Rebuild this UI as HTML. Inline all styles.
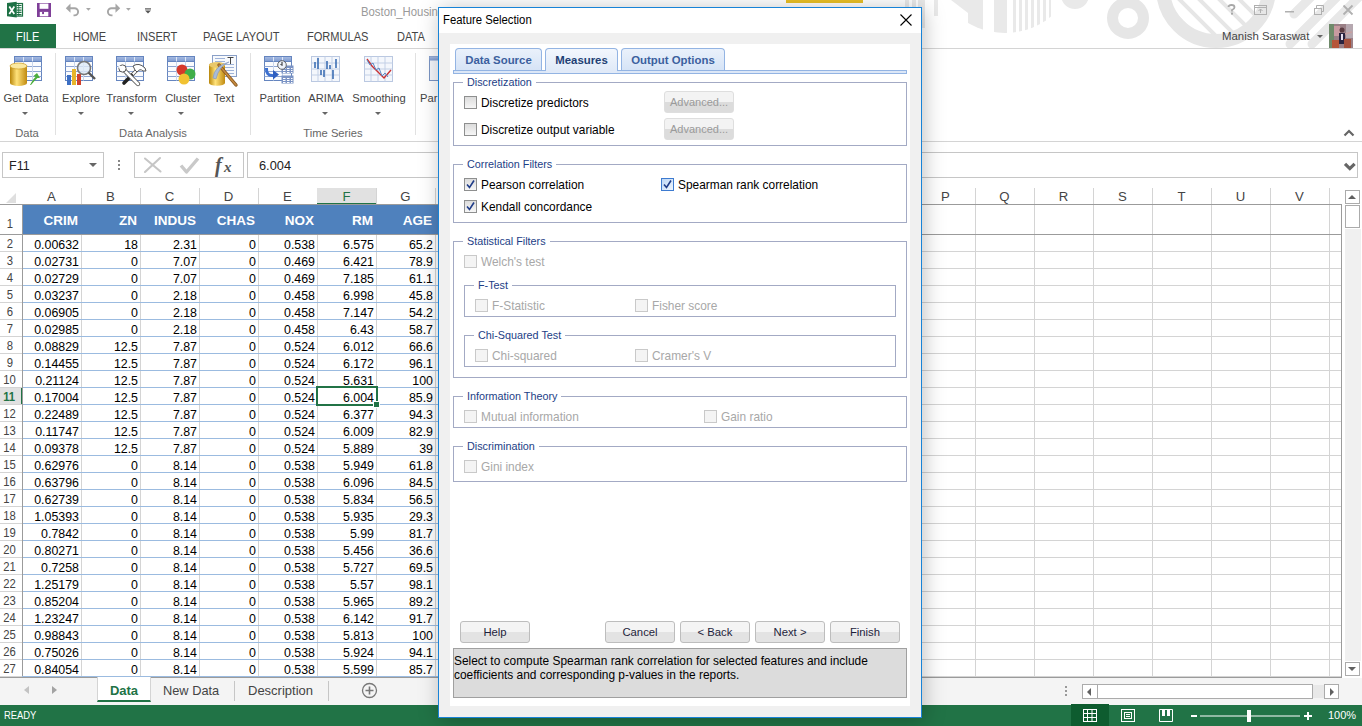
<!DOCTYPE html>
<html><head><meta charset="utf-8">
<style>
*{box-sizing:border-box;margin:0;padding:0}
html,body{width:1362px;height:726px;overflow:hidden;background:#fff;font-family:"Liberation Sans",sans-serif;position:relative}
.a{position:absolute}
/* title bar */
.ttl{position:absolute;left:361px;top:5px;font-size:12.6px;color:#9a9a9a;white-space:nowrap;transform:scaleX(0.9);transform-origin:0 0}
.rtab{position:absolute;top:30px;font-size:12.5px;color:#444;white-space:nowrap;transform:scaleX(0.885);transform-origin:0 0}
/* ribbon */
.rb{position:absolute;font-size:11.2px;color:#444;white-space:nowrap;text-align:center}
.gl{position:absolute;top:127px;font-size:11.2px;color:#666;white-space:nowrap;text-align:center}
.dd{position:absolute;width:0;height:0;border-left:3.5px solid transparent;border-right:3.5px solid transparent;border-top:3.5px solid #666}
.sep{position:absolute;top:53px;width:1px;height:82px;background:#e1e1e1}
/* grid */
.vl{position:absolute;top:188px;width:1px;height:488px;background:#d4d4d4}
.hl{position:absolute;left:0;width:1341px;height:1px;background:#d4d4d4}
.hlb{position:absolute;left:22px;width:420px;height:1px;background:#9bbbe0}
.thead{position:absolute;background:#4f81bd}
.th{position:absolute;color:#fff;font-weight:bold;font-size:13.5px;padding-top:2px;text-align:right;white-space:nowrap}
.td{position:absolute;height:17px;line-height:18px;padding-top:2px;font-size:12.4px;color:#000;text-align:right;white-space:nowrap}
.rh{position:absolute;left:0;width:20px;height:17px;line-height:18px;padding-top:1px;font-size:13.6px;color:#444;text-align:center;white-space:nowrap}
.rh span{display:inline-block;transform:scaleX(0.83)}
.rh.sel{color:#217346;font-weight:bold;background:#e1e1e1;width:23px;border-right:2px solid #217346;padding-right:3px;margin-top:1px;height:16px;padding-top:0}
.ch{position:absolute;top:188px;width:59px;height:17px;line-height:18px;font-size:13.2px;color:#444;text-align:center}
.ch.sel{background:#e1e1e1;color:#217346;border-bottom:2px solid #217346;height:17px}
/* dialog */
.dlg{position:absolute;left:438px;top:7px;width:484px;height:711px;background:#fff;border:1px solid #1883d7;box-shadow:2px 2px 20px rgba(0,0,0,0.25)}
.dfont{font-family:"Liberation Sans",sans-serif}
.gb{position:absolute;border:1px solid #a3aac4}
.gbl{position:absolute;top:-7px;left:9px;background:#fff;padding:0 4px;font-size:10.8px;color:#1c3e86;white-space:nowrap;line-height:13px}
.cb{position:absolute;width:13px;height:13px;border:1px solid #8e8f8f;background:linear-gradient(#dcdcdc,#f6f6f6)}
.cb.dis{border-color:#c9c9c9;background:#f4f4f4}
.cbl{position:absolute;font-size:11.9px;color:#000;white-space:nowrap;line-height:14px;padding-top:1px}
.cbl.dis{color:#a8a8a8}
.btn{position:absolute;width:70px;height:22px;border:1px solid #bdbdbd;border-radius:3px;background:linear-gradient(#f4f4f4 0,#f4f4f4 50%,#e3e3e3 50%,#e3e3e3 100%);font-size:11.3px;color:#1e1e3c;text-align:center;line-height:20px}
.btn.dis{color:#9a9a9a;border-color:#dedede;font-size:11px;background:linear-gradient(#f3f3f3 0,#f3f3f3 50%,#dcdcdc 50%,#dcdcdc 100%)}
.tab{position:absolute;top:48px;height:23px;border:1px solid #93b4e3;border-bottom:none;border-radius:4px 4px 0 0;background:linear-gradient(#eaf1fb,#d5e3f6);font-size:11.4px;font-weight:bold;color:#3b5f9e;text-align:center;line-height:22px;white-space:nowrap}
</style></head><body>

<!-- ===== title bar ===== -->
<svg class="a" style="left:600px;top:0" width="762" height="48" viewBox="600 0 762 48">
  <defs>
    <clipPath id="ringclip"><circle cx="1216" cy="-12" r="47"/></clipPath>
    <clipPath id="halfd"><circle cx="1005" cy="-40" r="73"/></clipPath>
  </defs>
  <g fill="#e9e9e9">
    <rect x="905" y="0" width="4" height="22"/><rect x="912" y="0" width="4" height="25"/>
    <rect x="918" y="0" width="7" height="28"/><rect x="934" y="0" width="4" height="16"/>
    <g clip-path="url(#halfd)">
      <path d="M951 0 H968 V13 Z"/>
      <rect x="968" y="0" width="15" height="40"/>
      <rect x="994" y="0" width="13" height="40"/>
      <rect x="1013" y="0" width="3" height="40"/><rect x="1019" y="0" width="3" height="40"/>
      <rect x="1025" y="0" width="3" height="40"/><rect x="1031" y="0" width="3" height="40"/>
      <rect x="1037" y="0" width="3" height="40"/><rect x="1043" y="0" width="3" height="40"/>
      <rect x="1049" y="0" width="2" height="40"/>
    </g>
    <circle cx="1075" cy="-5" r="14"/>
  </g>
  <circle cx="1128" cy="18" r="15.5" fill="none" stroke="#e6e6e6" stroke-width="11"/>
  <circle cx="1216" cy="-12" r="53" fill="none" stroke="#e6e6e6" stroke-width="14"/>
  <g clip-path="url(#ringclip)" stroke="#e6e6e6" stroke-width="4">
    <path d="M1150 -10 L1210 50 M1160 -20 L1225 45 M1170 -30 L1240 40 M1180 -40 L1255 35 M1190 -50 L1270 30"/>
  </g>
  <g stroke="#e8e8e8" stroke-width="9" stroke-linecap="round">
    <path d="M1314 -6 L1294 14 M1340 -6 L1290 44 M1362 -6 L1312 44"/>
  </g>
  <rect x="786" y="0" width="77" height="3" fill="#e8bf26"/>
</svg>
<!-- excel icon -->
<svg class="a" style="left:0;top:0" width="160" height="24" viewBox="0 0 160 24">
  <rect x="15.5" y="3.5" width="7" height="12.6" fill="#fff" stroke="#1e7145" stroke-width="1.2"/>
  <path d="M16.5 5.5 H21.5 M16.5 7.8 H21.5 M16.5 10.1 H21.5 M16.5 12.4 H21.5 M16.5 14.6 H21.5" stroke="#1e7145" stroke-width="1.1"/>
  <path d="M18.7 3.5 V16" stroke="#1e7145" stroke-width="0.8"/>
  <path d="M7 3 L16.7 1.8 L16.7 17.6 L7 16.3 Z" fill="#1e7145"/>
  <path d="M9.3 6.6 L14.3 14 M14.3 6.6 L9.3 14" stroke="#fff" stroke-width="1.7"/>
  <!-- save -->
  <rect x="37" y="3" width="14" height="14" fill="#7f3f98"/>
  <rect x="39.6" y="3.6" width="8.8" height="5.2" fill="#fff"/>
  <rect x="39.8" y="11.9" width="8.5" height="4.4" fill="#fff"/>
  <rect x="42.1" y="11.9" width="1.9" height="2.2" fill="#7f3f98"/>
  <!-- undo -->
  <path d="M69 8.2 H74.5 A3.6 3.6 0 0 1 74.5 15.4 H73.5" fill="none" stroke="#a6a6a6" stroke-width="1.9"/>
  <path d="M65.8 8.2 L70.5 3.6 L70.5 12.8 Z" fill="#a6a6a6"/>
  <path d="M86 8 L90.8 8 L88.4 10.8 Z" fill="#a6a6a6"/>
  <!-- redo -->
  <path d="M117 8.2 H111.5 A3.6 3.6 0 0 0 111.5 15.4 H112.5" fill="none" stroke="#a6a6a6" stroke-width="1.9"/>
  <path d="M120.2 8.2 L115.5 3.6 L115.5 12.8 Z" fill="#a6a6a6"/>
  <path d="M126 8 L130.8 8 L128.4 10.8 Z" fill="#a6a6a6"/>
  <!-- customize -->
  <rect x="145" y="8.3" width="6" height="1.2" fill="#555"/>
  <path d="M145 10.6 L151 10.6 L148 13.6 Z" fill="#555"/>
</svg>
<div class="ttl">Boston_Housing</div>
<!-- window controls -->
<svg class="a" style="left:1220px;top:0" width="142" height="20" viewBox="1220 0 142 20">
  <path d="M1228.5 7 Q1228.5 5 1231.5 5 Q1234.5 5 1234.5 7.3 Q1234.5 9 1232 10 V11.5" fill="none" stroke="#a8a8a8" stroke-width="1.8"/>
  <rect x="1231" y="12.6" width="2" height="2" fill="#a8a8a8"/>
  <rect x="1254.5" y="5.5" width="12" height="9" fill="none" stroke="#b0b0b0" stroke-width="1"/>
  <path d="M1254.5 7.5 H1266.5" stroke="#b0b0b0"/>
  <path d="M1260.5 13 V9 M1258.5 11 L1260.5 9 L1262.5 11" fill="none" stroke="#b0b0b0" stroke-width="1"/>
  <rect x="1285" y="11" width="9" height="1.5" fill="#b0b0b0"/>
  <rect x="1314.5" y="8.5" width="7" height="6" fill="none" stroke="#b0b0b0" stroke-width="1"/>
  <path d="M1316.5 8.5 V5.5 H1323.5 V11.5 H1321.5" fill="none" stroke="#b0b0b0" stroke-width="1"/>
  <path d="M1343.5 5.5 L1352.5 14.5 M1352.5 5.5 L1343.5 14.5" stroke="#b0b0b0" stroke-width="1.8"/>
</svg>

<!-- ===== ribbon tabs ===== -->
<div class="a" style="left:0;top:24px;width:56px;height:24px;background:#217346"></div>
<div class="rtab" style="left:16px;color:#fff">FILE</div>
<div class="rtab" style="left:73px">HOME</div>
<div class="rtab" style="left:137px">INSERT</div>
<div class="rtab" style="left:203px">PAGE LAYOUT</div>
<div class="rtab" style="left:307px">FORMULAS</div>
<div class="rtab" style="left:397px">DATA</div>
<div class="a" style="left:1222px;top:30px;font-size:11.4px;color:#444;white-space:nowrap">Manish Saraswat</div>
<div class="dd" style="left:1317px;top:35px"></div>
<svg class="a" style="left:1329px;top:24px" width="24" height="24" viewBox="0 0 24 24">
  <rect width="24" height="24" fill="#9a7f86"/>
  <rect x="0" y="0" width="5" height="24" fill="#6f8a6a"/>
  <rect x="17" y="0" width="7" height="14" fill="#b6a8b0"/>
  <rect x="5" y="2" width="6" height="10" fill="#c89aa0"/>
  <circle cx="13" cy="6" r="2.5" fill="#5a3a40"/>
  <rect x="10" y="9" width="6" height="11" fill="#2a2440"/>
  <rect x="12" y="10" width="2" height="6" fill="#e8e0f0"/>
  <rect x="3" y="16" width="7" height="8" fill="#b5563a"/>
  <rect x="15" y="15" width="7" height="9" fill="#a4503c"/>
  <path d="M16 10 L23 8" stroke="#c9a0a0" stroke-width="1.5"/>
</svg>
<div class="a" style="left:0;top:48px;width:1362px;height:1px;background:#d4d4d4"></div>

<!-- ===== ribbon body ===== -->
<!-- icons -->
<svg class="a" style="left:0;top:50px" width="440" height="40" viewBox="0 50 440 40">
  <defs>
    <linearGradient id="gold" x1="0" x2="1"><stop offset="0" stop-color="#b8860b"/><stop offset="0.4" stop-color="#ffe27a"/><stop offset="1" stop-color="#c08a10"/></linearGradient>
    <linearGradient id="tbl" x1="0" y1="0" x2="0" y2="1"><stop offset="0" stop-color="#a9bde3"/><stop offset="1" stop-color="#7d9ad0"/></linearGradient>
  </defs>
  <!-- Get Data -->
  <g transform="translate(14,56)">
    <rect x="0.5" y="0.5" width="27" height="24" fill="#fbfcfe" stroke="#6585bf"/>
    <rect x="0.5" y="0.5" width="27" height="5" fill="url(#tbl)" stroke="#6585bf"/>
    <path d="M0.5 10.5 H27.5 M0.5 15.5 H27.5 M0.5 20.5 H27.5" stroke="#8fa6d2" stroke-width="1"/>
    <path d="M9.5 1 V5 M18.5 1 V5" stroke="#dfe7f5" stroke-width="1"/>
    <path d="M9.5 5.5 V24.5 M18.5 5.5 V24.5" stroke="#c9d6ec" stroke-width="1"/>
  </g>
  <path d="M10 83 V66 A8.5 3 0 0 1 27 66 V83 A8.5 3 0 0 1 10 83Z" fill="url(#gold)"/>
  <ellipse cx="18.5" cy="66" rx="8.5" ry="3" fill="#fbe9a0" stroke="#c8961b" stroke-width="0.6"/>
  <path d="M30 85 Q33 79 35.5 77 L33.5 76 L37 73 L40 78 L37.5 78 Q34 81 31 85Z" fill="#4cae3c"/>
  <!-- Explore -->
  <g transform="translate(65,56)">
    <rect x="0.5" y="0.5" width="27" height="24" fill="#fbfcfe" stroke="#6585bf"/>
    <rect x="0.5" y="0.5" width="27" height="5" fill="url(#tbl)" stroke="#6585bf"/>
    <path d="M0.5 10.5 H27.5 M0.5 15.5 H27.5 M0.5 20.5 H27.5" stroke="#8fa6d2" stroke-width="1"/>
    <path d="M9.5 1 V5 M18.5 1 V5" stroke="#dfe7f5" stroke-width="1"/>
    <path d="M9.5 5.5 V24.5 M18.5 5.5 V24.5" stroke="#c9d6ec" stroke-width="1"/>
  </g>
  <rect x="67" y="75" width="4" height="10" fill="#3d6fc4"/>
  <rect x="72" y="69" width="4" height="16" fill="#e7b62a"/>
  <rect x="77" y="74" width="4" height="11" fill="#d0402b"/>
  <circle cx="84" cy="68" r="6.5" fill="#dfeaf6" fill-opacity="0.8" stroke="#777" stroke-width="1.6"/>
  <path d="M88.5 72.5 L95 79" stroke="#555" stroke-width="2.4"/>
  <!-- Transform -->
  <g transform="translate(116,56)">
    <rect x="0.5" y="0.5" width="27" height="24" fill="#fbfcfe" stroke="#6585bf"/>
    <rect x="0.5" y="0.5" width="27" height="5" fill="url(#tbl)" stroke="#6585bf"/>
    <path d="M0.5 10.5 H27.5 M0.5 15.5 H27.5 M0.5 20.5 H27.5" stroke="#8fa6d2" stroke-width="1"/>
    <path d="M9.5 1 V5 M18.5 1 V5" stroke="#dfe7f5" stroke-width="1"/>
    <path d="M9.5 5.5 V24.5 M18.5 5.5 V24.5" stroke="#c9d6ec" stroke-width="1"/>
  </g>
  <path d="M137 70 L131 76" stroke="#555" stroke-width="3.6"/>
  <path d="M137 70 L131 76" stroke="#fff" stroke-width="2"/>
  <path d="M131.5 75.5 L124 83" stroke="#222" stroke-width="3.6" stroke-linecap="round"/>
  <path d="M133 66 Q139 62 145 68 L146 71 L143 71 Q140 68 137 72 L135 70 Z" fill="#fff" stroke="#555" stroke-width="1"/>
  <path d="M124 70 L138 84" stroke="#555" stroke-width="4.4" stroke-linecap="round"/>
  <path d="M124 70 L138 84" stroke="#fff" stroke-width="2.6" stroke-linecap="round"/>
  <circle cx="122.5" cy="68.5" r="3.6" fill="#fff" stroke="#555" stroke-width="1"/>
  <path d="M119 66 L122 69" stroke="#fbfcfe" stroke-width="2.4"/>
  <!-- Cluster -->
  <g transform="translate(167,56)">
    <rect x="0.5" y="0.5" width="27" height="24" fill="#fbfcfe" stroke="#6585bf"/>
    <rect x="0.5" y="0.5" width="27" height="5" fill="url(#tbl)" stroke="#6585bf"/>
    <path d="M0.5 10.5 H27.5 M0.5 15.5 H27.5 M0.5 20.5 H27.5" stroke="#8fa6d2" stroke-width="1"/>
    <path d="M9.5 1 V5 M18.5 1 V5" stroke="#dfe7f5" stroke-width="1"/>
    <path d="M9.5 5.5 V24.5 M18.5 5.5 V24.5" stroke="#c9d6ec" stroke-width="1"/>
  </g>
  <circle cx="182" cy="70" r="5.5" fill="#d6382a"/>
  <circle cx="190" cy="74" r="5.5" fill="#3fae49"/>
  <circle cx="184" cy="79" r="5.5" fill="#f1c232"/>
  <!-- Text -->
  <rect x="212.5" y="55.5" width="24" height="21" fill="#f7f9fc" stroke="#8aa0c8"/>
  <path d="M215 58.5 H225 M215 61.5 H225 M215 64.5 H234 M215 67.5 H234 M215 70.5 H234 M215 73.5 H234" stroke="#9fb3d8"/>
  <path d="M227.5 57.5 H233.5 M230.5 57.5 V64" stroke="#444" stroke-width="1"/>
  <path d="M209 83 V65 A8 2.8 0 0 1 225 65 V83 A8 2.8 0 0 1 209 83Z" fill="url(#gold)"/>
  <ellipse cx="217" cy="65" rx="8" ry="2.8" fill="#e9c86a"/>
  <path d="M219 65 L236 85" stroke="#8a5a22" stroke-width="3.4" stroke-linecap="round"/>
  <path d="M219 65 L236 85" stroke="#c58a3e" stroke-width="1.6" stroke-linecap="round"/>
  <path d="M213 78 Q214 66 229 62 Q219 66 216 79 Z" fill="#a9bcd8" stroke="#7f94b8" stroke-width="0.6"/>
  <!-- Partition -->
  <g transform="translate(264,56)">
    <rect x="0.5" y="0.5" width="27" height="24" fill="#fbfcfe" stroke="#6585bf"/>
    <rect x="0.5" y="0.5" width="27" height="5" fill="url(#tbl)" stroke="#6585bf"/>
    <path d="M0.5 10.5 H27.5 M0.5 15.5 H27.5 M0.5 20.5 H27.5" stroke="#8fa6d2" stroke-width="1"/>
    <path d="M9.5 1 V5 M18.5 1 V5" stroke="#dfe7f5" stroke-width="1"/>
    <path d="M9.5 5.5 V24.5 M18.5 5.5 V24.5" stroke="#c9d6ec" stroke-width="1"/>
  </g>
  <rect x="281.5" y="65.5" width="12" height="8" fill="#7b93c4"/>
  <path d="M283 68.5 H285.5 M287 68.5 H289.5 M291 68.5 H292.5 M283 70.5 H285.5 M287 70.5 H289.5 M291 70.5 H292.5 M283 72.5 H285.5 M287 72.5 H289.5 M291 72.5 H292.5" stroke="#fff" stroke-width="1"/>
  <rect x="281.5" y="75.5" width="12" height="8" fill="#7b93c4"/>
  <path d="M283 78.5 H285.5 M287 78.5 H289.5 M291 78.5 H292.5 M283 80.5 H285.5 M287 80.5 H289.5 M291 80.5 H292.5 M283 82.5 H285.5 M287 82.5 H289.5 M291 82.5 H292.5" stroke="#fff" stroke-width="1"/>
  <circle cx="282" cy="65" r="4.3" fill="#eef3fb" stroke="#555" stroke-width="0.9"/>
  <path d="M282 62 V65.5 L280.5 64" fill="none" stroke="#222" stroke-width="1"/>
  <path d="M266.5 68 Q266 76 273 75.5" fill="none" stroke="#3b6fd0" stroke-width="3"/>
  <path d="M273 70 L279 74.5 L273 79.5 Z" fill="#2f5fc0"/>
  <!-- ARIMA -->
  <rect x="311.5" y="56.5" width="28" height="25" fill="#f4f7fc" stroke="#7b95c4" stroke-dasharray="1 1"/>
  <path d="M311.5 63 H339.5 M311.5 69 H339.5 M311.5 75 H339.5 M318 56.5 V81.5 M325 56.5 V81.5 M332 56.5 V81.5" stroke="#c3d0e6"/>
  <path d="M315 68 V62 M318 69 V58 M321 70 V75 M324 70 V77 M327 61 V69 M330 65 V69 M333 70 V79 M336 59 V68" stroke="#3d6fb4" stroke-width="1.6"/>
  <!-- Smoothing -->
  <rect x="364.5" y="56.5" width="28" height="25" fill="#f4f7fc" stroke="#7b95c4" stroke-dasharray="1 1"/>
  <path d="M364.5 63 H392.5 M364.5 69 H392.5 M364.5 75 H392.5 M371 56.5 V81.5 M378 56.5 V81.5 M385 56.5 V81.5" stroke="#c3d0e6"/>
  <path d="M367 59 L372 66 L377 71 L384 78 L391 70" fill="none" stroke="#cc3030" stroke-width="1.4"/>
  <path d="M367 60 L370 65 L373 63 L376 70 L379 68 L382 76 L385 73 L388 77" fill="none" stroke="#5b89c4" stroke-width="1"/>
  <!-- Par -->
  <g transform="translate(429,56)">
    <rect x="0.5" y="0.5" width="27" height="24" fill="#f4f7fc" stroke="#7b95c4"/>
    <rect x="0.5" y="0.5" width="27" height="4" fill="url(#tbl)"/>
  </g>
</svg>
<div class="rb" style="left:0px;top:92px;width:52px">Get Data</div>
<div class="rb" style="left:57px;top:92px;width:48px">Explore</div>
<div class="rb" style="left:104px;top:92px;width:55px">Transform</div>
<div class="rb" style="left:162px;top:92px;width:42px">Cluster</div>
<div class="rb" style="left:207px;top:92px;width:34px">Text</div>
<div class="rb" style="left:255px;top:92px;width:50px">Partition</div>
<div class="rb" style="left:305px;top:92px;width:42px">ARIMA</div>
<div class="rb" style="left:347px;top:92px;width:64px">Smoothing</div>
<div class="rb" style="left:420px;top:92px;width:30px;text-align:left">Par</div>
<div class="dd" style="left:22px;top:112px"></div>
<div class="dd" style="left:78px;top:112px"></div>
<div class="dd" style="left:128px;top:112px"></div>
<div class="dd" style="left:178px;top:112px"></div>
<div class="dd" style="left:322px;top:112px"></div>
<div class="dd" style="left:375px;top:112px"></div>
<div class="sep" style="left:55px"></div>
<div class="sep" style="left:250px"></div>
<div class="sep" style="left:415px"></div>
<div class="gl" style="left:0;width:54px">Data</div>
<div class="gl" style="left:56px;width:194px">Data Analysis</div>
<div class="gl" style="left:251px;width:164px">Time Series</div>
<svg class="a" style="left:1343px;top:129px" width="12" height="8" viewBox="0 0 12 8"><path d="M1.5 6.5 L6 2 L10.5 6.5" fill="none" stroke="#666" stroke-width="2.2"/></svg>
<div class="a" style="left:0;top:141px;width:1362px;height:1px;background:#d4d4d4"></div>

<!-- ===== formula bar ===== -->
<div class="a" style="left:2px;top:152px;width:102px;height:26px;border:1px solid #c6c6c6;background:#fff"></div>
<div class="a" style="left:9px;top:159px;font-size:12.5px;color:#222">F11</div>
<div class="dd" style="left:89px;top:163px;border-left-width:4px;border-right-width:4px;border-top-width:4px;border-top-color:#666"></div>
<div class="a" style="left:118px;top:160px;width:2px;height:2px;background:#888;box-shadow:0 4px 0 #888,0 8px 0 #888"></div>
<div class="a" style="left:134px;top:152px;width:110px;height:26px;border:1px solid #c6c6c6;background:#fff"></div>
<svg class="a" style="left:130px;top:148px" width="110" height="32" viewBox="130 148 110 32">
  <path d="M145 158.5 L160.5 171.5 M160 158 L145 172" stroke="#c6c6c6" stroke-width="2.1" stroke-linecap="round"/>
  <path d="M181 165.5 L186.5 172 L198 158.5" fill="none" stroke="#c9c9c9" stroke-width="3.4" stroke-linejoin="round"/>
  <text x="215" y="172" font-size="20" font-style="italic" font-weight="bold" fill="#555" font-family="Liberation Serif">f</text>
  <text x="224" y="172" font-size="15" font-style="italic" font-weight="bold" fill="#555" font-family="Liberation Serif">x</text>
</svg>
<div class="a" style="left:247px;top:152px;width:1111px;height:26px;border:1px solid #c6c6c6;background:#fff"></div>
<div class="a" style="left:259px;top:158px;font-size:12.8px;color:#222">6.004</div>
<svg class="a" style="left:1343px;top:162px" width="14" height="10" viewBox="0 0 14 10"><path d="M2 1.8 L6.8 6.6 L11.6 1.8" fill="none" stroke="#666" stroke-width="3.2"/></svg>

<!-- ===== grid ===== -->
<div class="a" style="left:0;top:188px;width:1341px;height:488px;background:#fff"></div>
<div class="vl" style="left:81px"></div>
<div class="vl" style="left:140px"></div>
<div class="vl" style="left:199px"></div>
<div class="vl" style="left:258px"></div>
<div class="vl" style="left:317px"></div>
<div class="vl" style="left:376px"></div>
<div class="vl" style="left:435px"></div>
<div class="vl" style="left:975px"></div>
<div class="vl" style="left:1034px"></div>
<div class="vl" style="left:1093px"></div>
<div class="vl" style="left:1152px"></div>
<div class="vl" style="left:1211px"></div>
<div class="vl" style="left:1270px"></div>
<div class="vl" style="left:1329px"></div>
<div class="vl" style="left:494px"></div>
<div class="hl" style="top:234px"></div>
<div class="hlb" style="top:234px"></div>
<div class="hl" style="top:251px"></div>
<div class="hlb" style="top:251px"></div>
<div class="hl" style="top:268px"></div>
<div class="hlb" style="top:268px"></div>
<div class="hl" style="top:285px"></div>
<div class="hlb" style="top:285px"></div>
<div class="hl" style="top:302px"></div>
<div class="hlb" style="top:302px"></div>
<div class="hl" style="top:319px"></div>
<div class="hlb" style="top:319px"></div>
<div class="hl" style="top:336px"></div>
<div class="hlb" style="top:336px"></div>
<div class="hl" style="top:353px"></div>
<div class="hlb" style="top:353px"></div>
<div class="hl" style="top:370px"></div>
<div class="hlb" style="top:370px"></div>
<div class="hl" style="top:387px"></div>
<div class="hlb" style="top:387px"></div>
<div class="hl" style="top:404px"></div>
<div class="hlb" style="top:404px"></div>
<div class="hl" style="top:421px"></div>
<div class="hlb" style="top:421px"></div>
<div class="hl" style="top:438px"></div>
<div class="hlb" style="top:438px"></div>
<div class="hl" style="top:455px"></div>
<div class="hlb" style="top:455px"></div>
<div class="hl" style="top:472px"></div>
<div class="hlb" style="top:472px"></div>
<div class="hl" style="top:489px"></div>
<div class="hlb" style="top:489px"></div>
<div class="hl" style="top:506px"></div>
<div class="hlb" style="top:506px"></div>
<div class="hl" style="top:523px"></div>
<div class="hlb" style="top:523px"></div>
<div class="hl" style="top:540px"></div>
<div class="hlb" style="top:540px"></div>
<div class="hl" style="top:557px"></div>
<div class="hlb" style="top:557px"></div>
<div class="hl" style="top:574px"></div>
<div class="hlb" style="top:574px"></div>
<div class="hl" style="top:591px"></div>
<div class="hlb" style="top:591px"></div>
<div class="hl" style="top:608px"></div>
<div class="hlb" style="top:608px"></div>
<div class="hl" style="top:625px"></div>
<div class="hlb" style="top:625px"></div>
<div class="hl" style="top:642px"></div>
<div class="hlb" style="top:642px"></div>
<div class="hl" style="top:659px"></div>
<div class="hlb" style="top:659px"></div>
<div class="hl" style="top:676px"></div>
<div class="hlb" style="top:676px"></div>
<div class="thead" style="left:22px;top:205px;width:420px;height:29px"></div>
<div class="th" style="left:22px;top:204px;width:56px;height:30px;line-height:30px">CRIM</div>
<div class="th" style="left:81px;top:204px;width:56px;height:30px;line-height:30px">ZN</div>
<div class="th" style="left:140px;top:204px;width:56px;height:30px;line-height:30px">INDUS</div>
<div class="th" style="left:199px;top:204px;width:56px;height:30px;line-height:30px">CHAS</div>
<div class="th" style="left:258px;top:204px;width:56px;height:30px;line-height:30px">NOX</div>
<div class="th" style="left:317px;top:204px;width:56px;height:30px;line-height:30px">RM</div>
<div class="th" style="left:376px;top:204px;width:56px;height:30px;line-height:30px">AGE</div>
<div class="td" style="left:22px;top:234px;width:57px">0.00632</div>
<div class="td" style="left:81px;top:234px;width:57px">18</div>
<div class="td" style="left:140px;top:234px;width:57px">2.31</div>
<div class="td" style="left:199px;top:234px;width:57px">0</div>
<div class="td" style="left:258px;top:234px;width:57px">0.538</div>
<div class="td" style="left:317px;top:234px;width:57px">6.575</div>
<div class="td" style="left:376px;top:234px;width:57px">65.2</div>
<div class="td" style="left:22px;top:251px;width:57px">0.02731</div>
<div class="td" style="left:81px;top:251px;width:57px">0</div>
<div class="td" style="left:140px;top:251px;width:57px">7.07</div>
<div class="td" style="left:199px;top:251px;width:57px">0</div>
<div class="td" style="left:258px;top:251px;width:57px">0.469</div>
<div class="td" style="left:317px;top:251px;width:57px">6.421</div>
<div class="td" style="left:376px;top:251px;width:57px">78.9</div>
<div class="td" style="left:22px;top:268px;width:57px">0.02729</div>
<div class="td" style="left:81px;top:268px;width:57px">0</div>
<div class="td" style="left:140px;top:268px;width:57px">7.07</div>
<div class="td" style="left:199px;top:268px;width:57px">0</div>
<div class="td" style="left:258px;top:268px;width:57px">0.469</div>
<div class="td" style="left:317px;top:268px;width:57px">7.185</div>
<div class="td" style="left:376px;top:268px;width:57px">61.1</div>
<div class="td" style="left:22px;top:285px;width:57px">0.03237</div>
<div class="td" style="left:81px;top:285px;width:57px">0</div>
<div class="td" style="left:140px;top:285px;width:57px">2.18</div>
<div class="td" style="left:199px;top:285px;width:57px">0</div>
<div class="td" style="left:258px;top:285px;width:57px">0.458</div>
<div class="td" style="left:317px;top:285px;width:57px">6.998</div>
<div class="td" style="left:376px;top:285px;width:57px">45.8</div>
<div class="td" style="left:22px;top:302px;width:57px">0.06905</div>
<div class="td" style="left:81px;top:302px;width:57px">0</div>
<div class="td" style="left:140px;top:302px;width:57px">2.18</div>
<div class="td" style="left:199px;top:302px;width:57px">0</div>
<div class="td" style="left:258px;top:302px;width:57px">0.458</div>
<div class="td" style="left:317px;top:302px;width:57px">7.147</div>
<div class="td" style="left:376px;top:302px;width:57px">54.2</div>
<div class="td" style="left:22px;top:319px;width:57px">0.02985</div>
<div class="td" style="left:81px;top:319px;width:57px">0</div>
<div class="td" style="left:140px;top:319px;width:57px">2.18</div>
<div class="td" style="left:199px;top:319px;width:57px">0</div>
<div class="td" style="left:258px;top:319px;width:57px">0.458</div>
<div class="td" style="left:317px;top:319px;width:57px">6.43</div>
<div class="td" style="left:376px;top:319px;width:57px">58.7</div>
<div class="td" style="left:22px;top:336px;width:57px">0.08829</div>
<div class="td" style="left:81px;top:336px;width:57px">12.5</div>
<div class="td" style="left:140px;top:336px;width:57px">7.87</div>
<div class="td" style="left:199px;top:336px;width:57px">0</div>
<div class="td" style="left:258px;top:336px;width:57px">0.524</div>
<div class="td" style="left:317px;top:336px;width:57px">6.012</div>
<div class="td" style="left:376px;top:336px;width:57px">66.6</div>
<div class="td" style="left:22px;top:353px;width:57px">0.14455</div>
<div class="td" style="left:81px;top:353px;width:57px">12.5</div>
<div class="td" style="left:140px;top:353px;width:57px">7.87</div>
<div class="td" style="left:199px;top:353px;width:57px">0</div>
<div class="td" style="left:258px;top:353px;width:57px">0.524</div>
<div class="td" style="left:317px;top:353px;width:57px">6.172</div>
<div class="td" style="left:376px;top:353px;width:57px">96.1</div>
<div class="td" style="left:22px;top:370px;width:57px">0.21124</div>
<div class="td" style="left:81px;top:370px;width:57px">12.5</div>
<div class="td" style="left:140px;top:370px;width:57px">7.87</div>
<div class="td" style="left:199px;top:370px;width:57px">0</div>
<div class="td" style="left:258px;top:370px;width:57px">0.524</div>
<div class="td" style="left:317px;top:370px;width:57px">5.631</div>
<div class="td" style="left:376px;top:370px;width:57px">100</div>
<div class="td" style="left:22px;top:387px;width:57px">0.17004</div>
<div class="td" style="left:81px;top:387px;width:57px">12.5</div>
<div class="td" style="left:140px;top:387px;width:57px">7.87</div>
<div class="td" style="left:199px;top:387px;width:57px">0</div>
<div class="td" style="left:258px;top:387px;width:57px">0.524</div>
<div class="td" style="left:317px;top:387px;width:57px">6.004</div>
<div class="td" style="left:376px;top:387px;width:57px">85.9</div>
<div class="td" style="left:22px;top:404px;width:57px">0.22489</div>
<div class="td" style="left:81px;top:404px;width:57px">12.5</div>
<div class="td" style="left:140px;top:404px;width:57px">7.87</div>
<div class="td" style="left:199px;top:404px;width:57px">0</div>
<div class="td" style="left:258px;top:404px;width:57px">0.524</div>
<div class="td" style="left:317px;top:404px;width:57px">6.377</div>
<div class="td" style="left:376px;top:404px;width:57px">94.3</div>
<div class="td" style="left:22px;top:421px;width:57px">0.11747</div>
<div class="td" style="left:81px;top:421px;width:57px">12.5</div>
<div class="td" style="left:140px;top:421px;width:57px">7.87</div>
<div class="td" style="left:199px;top:421px;width:57px">0</div>
<div class="td" style="left:258px;top:421px;width:57px">0.524</div>
<div class="td" style="left:317px;top:421px;width:57px">6.009</div>
<div class="td" style="left:376px;top:421px;width:57px">82.9</div>
<div class="td" style="left:22px;top:438px;width:57px">0.09378</div>
<div class="td" style="left:81px;top:438px;width:57px">12.5</div>
<div class="td" style="left:140px;top:438px;width:57px">7.87</div>
<div class="td" style="left:199px;top:438px;width:57px">0</div>
<div class="td" style="left:258px;top:438px;width:57px">0.524</div>
<div class="td" style="left:317px;top:438px;width:57px">5.889</div>
<div class="td" style="left:376px;top:438px;width:57px">39</div>
<div class="td" style="left:22px;top:455px;width:57px">0.62976</div>
<div class="td" style="left:81px;top:455px;width:57px">0</div>
<div class="td" style="left:140px;top:455px;width:57px">8.14</div>
<div class="td" style="left:199px;top:455px;width:57px">0</div>
<div class="td" style="left:258px;top:455px;width:57px">0.538</div>
<div class="td" style="left:317px;top:455px;width:57px">5.949</div>
<div class="td" style="left:376px;top:455px;width:57px">61.8</div>
<div class="td" style="left:22px;top:472px;width:57px">0.63796</div>
<div class="td" style="left:81px;top:472px;width:57px">0</div>
<div class="td" style="left:140px;top:472px;width:57px">8.14</div>
<div class="td" style="left:199px;top:472px;width:57px">0</div>
<div class="td" style="left:258px;top:472px;width:57px">0.538</div>
<div class="td" style="left:317px;top:472px;width:57px">6.096</div>
<div class="td" style="left:376px;top:472px;width:57px">84.5</div>
<div class="td" style="left:22px;top:489px;width:57px">0.62739</div>
<div class="td" style="left:81px;top:489px;width:57px">0</div>
<div class="td" style="left:140px;top:489px;width:57px">8.14</div>
<div class="td" style="left:199px;top:489px;width:57px">0</div>
<div class="td" style="left:258px;top:489px;width:57px">0.538</div>
<div class="td" style="left:317px;top:489px;width:57px">5.834</div>
<div class="td" style="left:376px;top:489px;width:57px">56.5</div>
<div class="td" style="left:22px;top:506px;width:57px">1.05393</div>
<div class="td" style="left:81px;top:506px;width:57px">0</div>
<div class="td" style="left:140px;top:506px;width:57px">8.14</div>
<div class="td" style="left:199px;top:506px;width:57px">0</div>
<div class="td" style="left:258px;top:506px;width:57px">0.538</div>
<div class="td" style="left:317px;top:506px;width:57px">5.935</div>
<div class="td" style="left:376px;top:506px;width:57px">29.3</div>
<div class="td" style="left:22px;top:523px;width:57px">0.7842</div>
<div class="td" style="left:81px;top:523px;width:57px">0</div>
<div class="td" style="left:140px;top:523px;width:57px">8.14</div>
<div class="td" style="left:199px;top:523px;width:57px">0</div>
<div class="td" style="left:258px;top:523px;width:57px">0.538</div>
<div class="td" style="left:317px;top:523px;width:57px">5.99</div>
<div class="td" style="left:376px;top:523px;width:57px">81.7</div>
<div class="td" style="left:22px;top:540px;width:57px">0.80271</div>
<div class="td" style="left:81px;top:540px;width:57px">0</div>
<div class="td" style="left:140px;top:540px;width:57px">8.14</div>
<div class="td" style="left:199px;top:540px;width:57px">0</div>
<div class="td" style="left:258px;top:540px;width:57px">0.538</div>
<div class="td" style="left:317px;top:540px;width:57px">5.456</div>
<div class="td" style="left:376px;top:540px;width:57px">36.6</div>
<div class="td" style="left:22px;top:557px;width:57px">0.7258</div>
<div class="td" style="left:81px;top:557px;width:57px">0</div>
<div class="td" style="left:140px;top:557px;width:57px">8.14</div>
<div class="td" style="left:199px;top:557px;width:57px">0</div>
<div class="td" style="left:258px;top:557px;width:57px">0.538</div>
<div class="td" style="left:317px;top:557px;width:57px">5.727</div>
<div class="td" style="left:376px;top:557px;width:57px">69.5</div>
<div class="td" style="left:22px;top:574px;width:57px">1.25179</div>
<div class="td" style="left:81px;top:574px;width:57px">0</div>
<div class="td" style="left:140px;top:574px;width:57px">8.14</div>
<div class="td" style="left:199px;top:574px;width:57px">0</div>
<div class="td" style="left:258px;top:574px;width:57px">0.538</div>
<div class="td" style="left:317px;top:574px;width:57px">5.57</div>
<div class="td" style="left:376px;top:574px;width:57px">98.1</div>
<div class="td" style="left:22px;top:591px;width:57px">0.85204</div>
<div class="td" style="left:81px;top:591px;width:57px">0</div>
<div class="td" style="left:140px;top:591px;width:57px">8.14</div>
<div class="td" style="left:199px;top:591px;width:57px">0</div>
<div class="td" style="left:258px;top:591px;width:57px">0.538</div>
<div class="td" style="left:317px;top:591px;width:57px">5.965</div>
<div class="td" style="left:376px;top:591px;width:57px">89.2</div>
<div class="td" style="left:22px;top:608px;width:57px">1.23247</div>
<div class="td" style="left:81px;top:608px;width:57px">0</div>
<div class="td" style="left:140px;top:608px;width:57px">8.14</div>
<div class="td" style="left:199px;top:608px;width:57px">0</div>
<div class="td" style="left:258px;top:608px;width:57px">0.538</div>
<div class="td" style="left:317px;top:608px;width:57px">6.142</div>
<div class="td" style="left:376px;top:608px;width:57px">91.7</div>
<div class="td" style="left:22px;top:625px;width:57px">0.98843</div>
<div class="td" style="left:81px;top:625px;width:57px">0</div>
<div class="td" style="left:140px;top:625px;width:57px">8.14</div>
<div class="td" style="left:199px;top:625px;width:57px">0</div>
<div class="td" style="left:258px;top:625px;width:57px">0.538</div>
<div class="td" style="left:317px;top:625px;width:57px">5.813</div>
<div class="td" style="left:376px;top:625px;width:57px">100</div>
<div class="td" style="left:22px;top:642px;width:57px">0.75026</div>
<div class="td" style="left:81px;top:642px;width:57px">0</div>
<div class="td" style="left:140px;top:642px;width:57px">8.14</div>
<div class="td" style="left:199px;top:642px;width:57px">0</div>
<div class="td" style="left:258px;top:642px;width:57px">0.538</div>
<div class="td" style="left:317px;top:642px;width:57px">5.924</div>
<div class="td" style="left:376px;top:642px;width:57px">94.1</div>
<div class="td" style="left:22px;top:659px;width:57px">0.84054</div>
<div class="td" style="left:81px;top:659px;width:57px">0</div>
<div class="td" style="left:140px;top:659px;width:57px">8.14</div>
<div class="td" style="left:199px;top:659px;width:57px">0</div>
<div class="td" style="left:258px;top:659px;width:57px">0.538</div>
<div class="td" style="left:317px;top:659px;width:57px">5.599</div>
<div class="td" style="left:376px;top:659px;width:57px">85.7</div>
<div class="rh" style="top:204px;height:30px;line-height:38px"><span>1</span></div>
<div class="rh" style="top:234px"><span>2</span></div>
<div class="rh" style="top:251px"><span>3</span></div>
<div class="rh" style="top:268px"><span>4</span></div>
<div class="rh" style="top:285px"><span>5</span></div>
<div class="rh" style="top:302px"><span>6</span></div>
<div class="rh" style="top:319px"><span>7</span></div>
<div class="rh" style="top:336px"><span>8</span></div>
<div class="rh" style="top:353px"><span>9</span></div>
<div class="rh" style="top:370px"><span>10</span></div>
<div class="rh sel" style="top:387px"><span>11</span></div>
<div class="rh" style="top:404px"><span>12</span></div>
<div class="rh" style="top:421px"><span>13</span></div>
<div class="rh" style="top:438px"><span>14</span></div>
<div class="rh" style="top:455px"><span>15</span></div>
<div class="rh" style="top:472px"><span>16</span></div>
<div class="rh" style="top:489px"><span>17</span></div>
<div class="rh" style="top:506px"><span>18</span></div>
<div class="rh" style="top:523px"><span>19</span></div>
<div class="rh" style="top:540px"><span>20</span></div>
<div class="rh" style="top:557px"><span>21</span></div>
<div class="rh" style="top:574px"><span>22</span></div>
<div class="rh" style="top:591px"><span>23</span></div>
<div class="rh" style="top:608px"><span>24</span></div>
<div class="rh" style="top:625px"><span>25</span></div>
<div class="rh" style="top:642px"><span>26</span></div>
<div class="rh" style="top:659px"><span>27</span></div>
<div class="ch" style="left:22px">A</div>
<div class="ch" style="left:81px">B</div>
<div class="ch" style="left:140px">C</div>
<div class="ch" style="left:199px">D</div>
<div class="ch" style="left:258px">E</div>
<div class="ch sel" style="left:317px">F</div>
<div class="ch" style="left:376px">G</div>
<div class="ch" style="left:916px">P</div>
<div class="ch" style="left:975px">Q</div>
<div class="ch" style="left:1034px">R</div>
<div class="ch" style="left:1093px">S</div>
<div class="ch" style="left:1152px">T</div>
<div class="ch" style="left:1211px">U</div>
<div class="ch" style="left:1270px">V</div>
<div class="a" style="left:0;top:204px;width:1341px;height:1px;background:#9b9b9b"></div>
<div class="a" style="left:22px;top:204px;width:1px;height:472px;background:#9b9b9b"></div>
<div class="a" style="left:0;top:234px;width:1341px;height:1px;background:#9b9b9b"></div>
<div class="a" style="left:0;top:677px;width:1341px;height:1px;background:#9b9b9b"></div>
<div class="a" style="left:1341px;top:204px;width:1px;height:474px;background:#9b9b9b"></div>
<svg class="a" style="left:4px;top:192px" width="14" height="12" viewBox="0 0 14 12"><path d="M12 1 V11 H2 Z" fill="#dfdfdf"/></svg>
<!-- active cell -->
<div class="a" style="left:316px;top:386px;width:62px;height:20px;border:2px solid #217346"></div>
<div class="a" style="left:373px;top:401px;width:7px;height:7px;background:#217346;border:1px solid #fff"></div>
<!-- v scrollbar -->
<div class="a" style="left:1345px;top:229px;width:16px;height:432px;background:#f0f0f0"></div>
<div class="a" style="left:1345px;top:190px;width:15px;height:14px;border:1px solid #ababab;background:#fff"></div>
<div class="a" style="left:1348px;top:195px;width:0;height:0;border-left:4.5px solid transparent;border-right:4.5px solid transparent;border-bottom:4px solid #606060"></div>
<div class="a" style="left:1345px;top:205px;width:15px;height:23px;border:1px solid #ababab;background:#fff"></div>
<div class="a" style="left:1345px;top:662px;width:15px;height:14px;border:1px solid #ababab;background:#fff"></div>
<div class="a" style="left:1348px;top:667px;width:0;height:0;border-left:4.5px solid transparent;border-right:4.5px solid transparent;border-top:4px solid #606060"></div>

<!-- ===== sheet tabs ===== -->
<div class="a" style="left:0;top:678px;width:1362px;height:27px;background:#f4f4f4"></div>
<div class="a" style="left:24px;top:686px;width:0;height:0;border-top:4px solid transparent;border-bottom:4px solid transparent;border-right:5px solid #c3c3c3"></div>
<div class="a" style="left:52px;top:686px;width:0;height:0;border-top:4px solid transparent;border-bottom:4px solid transparent;border-left:5px solid #a3a3a3"></div>
<div class="a" style="left:97px;top:677px;width:54px;height:25px;background:#fff;border-left:1px solid #d4d4d4;border-right:1px solid #d4d4d4;border-bottom:2px solid #217346"></div>
<div class="a" style="left:97px;top:683px;width:54px;text-align:center;font-size:13px;font-weight:bold;color:#217346">Data</div>
<div class="a" style="left:163px;top:683px;font-size:12.8px;color:#444">New Data</div>
<div class="a" style="left:234px;top:681px;width:1px;height:20px;background:#c6c6c6"></div>
<div class="a" style="left:248px;top:683px;font-size:13px;color:#444">Description</div>
<div class="a" style="left:328px;top:681px;width:1px;height:20px;background:#c6c6c6"></div>
<svg class="a" style="left:361px;top:682px" width="17" height="17" viewBox="0 0 17 17"><circle cx="8.5" cy="8.5" r="7" fill="none" stroke="#777" stroke-width="1.3"/><path d="M8.5 4.5 V12.5 M4.5 8.5 H12.5" stroke="#777" stroke-width="1.6"/></svg>
<!-- h scrollbar -->
<div class="a" style="left:1065px;top:686px;width:2px;height:2px;background:#999;box-shadow:0 4px 0 #999,0 8px 0 #999"></div>
<div class="a" style="left:1082px;top:685px;width:257px;height:13px;background:#e8e8e8"></div>
<div class="a" style="left:1082px;top:684px;width:16px;height:15px;border:1px solid #ababab;background:#fff"></div>
<div class="a" style="left:1087px;top:688px;width:0;height:0;border-top:4px solid transparent;border-bottom:4px solid transparent;border-right:4px solid #606060"></div>
<div class="a" style="left:1097px;top:684px;width:216px;height:15px;border:1px solid #ababab;background:#fff"></div>
<div class="a" style="left:1324px;top:684px;width:15px;height:15px;border:1px solid #ababab;background:#fff"></div>
<div class="a" style="left:1330px;top:688px;width:0;height:0;border-top:4px solid transparent;border-bottom:4px solid transparent;border-left:4px solid #606060"></div>

<!-- ===== status bar ===== -->
<div class="a" style="left:0;top:705px;width:1362px;height:21px;background:#217346"></div>
<div class="a" style="left:4px;top:709px;font-size:10.8px;color:#fff;transform:scaleX(0.87);transform-origin:0 0">READY</div>
<div class="a" style="left:1071px;top:704px;width:38px;height:22px;background:#0e5c2f"></div>
<svg class="a" style="left:1080px;top:707px" width="240" height="18" viewBox="0 0 240 18">
  <g fill="none" stroke="#fff" stroke-width="1">
    <rect x="3.5" y="2.5" width="13" height="12"/>
    <path d="M7.5 2.5 V14.5 M12 2.5 V14.5 M3.5 6.5 H16.5 M3.5 10.5 H16.5"/>
    <rect x="41.5" y="2.5" width="13" height="12"/>
    <rect x="44.5" y="5.5" width="7" height="6"/>
    <path d="M46 7.5 H50 M46 9.5 H50"/>
    <path d="M79.5 14.5 V2.5 H92.5 V14.5 H79.5"/>
  </g>
  <rect x="82" y="3" width="3" height="6" fill="#fff"/><rect x="87" y="3" width="3" height="6" fill="#fff"/>
  <rect x="111" y="8" width="6" height="2" fill="#fff"/>
  <rect x="120" y="8.5" width="100" height="1" fill="#fff"/>
  <rect x="167" y="3" width="4" height="12" fill="#fff"/>
  <rect x="224" y="8" width="8" height="2" fill="#fff"/><rect x="227" y="5" width="2" height="8" fill="#fff"/>
</svg>
<div class="a" style="left:1328px;top:709px;font-size:11px;color:#fff">100%</div>

<!-- ===== dialog ===== -->
<div class="dlg"></div>
<div class="a" style="left:443px;top:13px;font-size:12.3px;color:#000;transform:scaleX(0.92);transform-origin:0 0">Feature Selection</div>
<svg class="a" style="left:900px;top:14px" width="12" height="12" viewBox="0 0 12 12"><path d="M0.5 0.5 L11.5 11.5 M11.5 0.5 L0.5 11.5" stroke="#000" stroke-width="1.1"/></svg>
<div class="a" style="left:439px;top:33px;width:482px;height:684px;background:#f0f0f0"></div>
<div class="a" style="left:450px;top:44px;width:460px;height:662px;background:#fff"></div>
<!-- tabs -->
<div class="tab" style="left:455px;width:87px">Data Source</div>
<div class="tab" style="left:545px;width:73px;height:26px;color:#223f74;background:linear-gradient(#f3f7fd,#dde8f7)">Measures</div>
<div class="tab" style="left:621px;width:104px">Output Options</div>
<div class="a" style="left:453px;top:70px;width:454px;height:4px;border:1px solid #93b4e3;background:#dce7f7"></div>
<div class="a" style="left:546px;top:70px;width:71px;height:3px;background:#e1eaf8"></div>

<!-- Discretization -->
<div class="gb" style="left:453px;top:82px;width:454px;height:64px"><span class="gbl">Discretization</span></div>
<div class="cb" style="left:464px;top:96px"></div><div class="cbl" style="left:481px;top:95px">Discretize predictors</div>
<div class="btn dis" style="left:664px;top:91px">Advanced...</div>
<div class="cb" style="left:464px;top:123px"></div><div class="cbl" style="left:481px;top:122px">Discretize output variable</div>
<div class="btn dis" style="left:664px;top:118px">Advanced...</div>

<!-- Correlation Filters -->
<div class="gb" style="left:453px;top:164px;width:454px;height:59px"><span class="gbl">Correlation Filters</span></div>
<div class="cb" style="left:464px;top:178px"><svg width="11" height="11" viewBox="0 0 11 11" style="position:absolute;left:0;top:0"><path d="M2 5.5 L4.5 8.5 L9 1.5" fill="none" stroke="#1f3c88" stroke-width="1.6"/></svg></div><div class="cbl" style="left:481px;top:177px">Pearson correlation</div>
<div class="cb" style="left:661px;top:178px;border-color:#3d7bd0;background:linear-gradient(135deg,#bcd6f5,#eef5fd)"><svg width="11" height="11" viewBox="0 0 11 11" style="position:absolute;left:0;top:0"><path d="M2 5.5 L4.5 8.5 L9 1.5" fill="none" stroke="#1f3c88" stroke-width="1.6"/></svg></div><div class="cbl" style="left:678px;top:177px">Spearman rank correlation</div>
<div class="cb" style="left:464px;top:200px"><svg width="11" height="11" viewBox="0 0 11 11" style="position:absolute;left:0;top:0"><path d="M2 5.5 L4.5 8.5 L9 1.5" fill="none" stroke="#1f3c88" stroke-width="1.6"/></svg></div><div class="cbl" style="left:481px;top:199px">Kendall concordance</div>

<!-- Statistical Filters -->
<div class="gb" style="left:453px;top:241px;width:454px;height:137px"><span class="gbl">Statistical Filters</span></div>
<div class="cb dis" style="left:464px;top:255px"></div><div class="cbl dis" style="left:481px;top:254px">Welch's test</div>
<div class="gb" style="left:464px;top:285px;width:432px;height:32px"><span class="gbl">F-Test</span></div>
<div class="cb dis" style="left:475px;top:299px"></div><div class="cbl dis" style="left:492px;top:298px">F-Statistic</div>
<div class="cb dis" style="left:635px;top:299px"></div><div class="cbl dis" style="left:652px;top:298px">Fisher score</div>
<div class="gb" style="left:464px;top:335px;width:432px;height:32px"><span class="gbl">Chi-Squared Test</span></div>
<div class="cb dis" style="left:475px;top:349px"></div><div class="cbl dis" style="left:492px;top:348px">Chi-squared</div>
<div class="cb dis" style="left:635px;top:349px"></div><div class="cbl dis" style="left:652px;top:348px">Cramer's V</div>

<!-- Information Theory -->
<div class="gb" style="left:453px;top:396px;width:454px;height:32px"><span class="gbl">Information Theory</span></div>
<div class="cb dis" style="left:464px;top:410px"></div><div class="cbl dis" style="left:481px;top:409px">Mutual information</div>
<div class="cb dis" style="left:704px;top:410px"></div><div class="cbl dis" style="left:721px;top:409px">Gain ratio</div>

<!-- Discrimination -->
<div class="gb" style="left:453px;top:446px;width:454px;height:36px"><span class="gbl">Discrimination</span></div>
<div class="cb dis" style="left:464px;top:460px"></div><div class="cbl dis" style="left:481px;top:459px">Gini index</div>

<!-- buttons -->
<div class="btn" style="left:460px;top:621px">Help</div>
<div class="btn" style="left:605px;top:621px">Cancel</div>
<div class="btn" style="left:680px;top:621px">&lt; Back</div>
<div class="btn" style="left:755px;top:621px">Next &gt;</div>
<div class="btn" style="left:830px;top:621px">Finish</div>
<div class="a" style="left:453px;top:648px;width:454px;height:50px;background:#dcdcdc;border:1px solid #a0a0a0"></div>
<div class="a" style="left:454px;top:654px;font-size:11.9px;line-height:14px;color:#000;white-space:nowrap">Select to compute Spearman rank correlation for selected features and include<br>coefficients and corresponding p-values in the reports.</div>

</body></html>
